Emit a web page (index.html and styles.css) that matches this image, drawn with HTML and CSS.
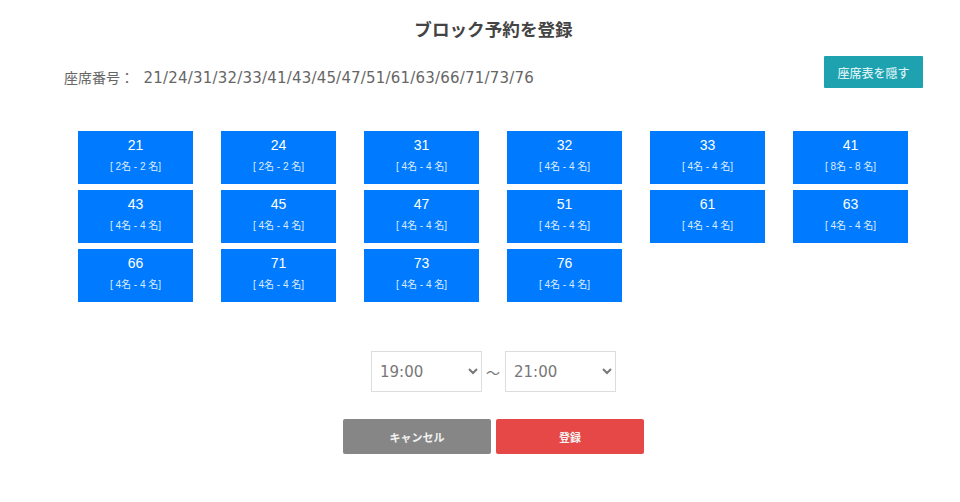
FILE: index.html
```html
<!DOCTYPE html>
<html>
<head>
  <meta charset="utf-8">
  <link rel="stylesheet" href="styles.css">
</head>
<body>
  <div class="modal">
    <h1 class="title">ブロック予約を登録</h1>

    <div class="seat-row">
      <div class="seat-label">座席番号： <span class="seat-list">21/24/31/32/33/41/43/45/47/51/61/63/66/71/73/76</span></div>
      <button class="toggle-button">座席表を隠す</button>
    </div>

    <div class="seat-grid">
      <div class="seat"><div class="seat-no">21</div><div class="seat-cap">[ 2名 - 2 名]</div></div>
      <div class="seat"><div class="seat-no">24</div><div class="seat-cap">[ 2名 - 2 名]</div></div>
      <div class="seat"><div class="seat-no">31</div><div class="seat-cap">[ 4名 - 4 名]</div></div>
      <div class="seat"><div class="seat-no">32</div><div class="seat-cap">[ 4名 - 4 名]</div></div>
      <div class="seat"><div class="seat-no">33</div><div class="seat-cap">[ 4名 - 4 名]</div></div>
      <div class="seat"><div class="seat-no">41</div><div class="seat-cap">[ 8名 - 8 名]</div></div>
      <div class="seat"><div class="seat-no">43</div><div class="seat-cap">[ 4名 - 4 名]</div></div>
      <div class="seat"><div class="seat-no">45</div><div class="seat-cap">[ 4名 - 4 名]</div></div>
      <div class="seat"><div class="seat-no">47</div><div class="seat-cap">[ 4名 - 4 名]</div></div>
      <div class="seat"><div class="seat-no">51</div><div class="seat-cap">[ 4名 - 4 名]</div></div>
      <div class="seat"><div class="seat-no">61</div><div class="seat-cap">[ 4名 - 4 名]</div></div>
      <div class="seat"><div class="seat-no">63</div><div class="seat-cap">[ 4名 - 4 名]</div></div>
      <div class="seat"><div class="seat-no">66</div><div class="seat-cap">[ 4名 - 4 名]</div></div>
      <div class="seat"><div class="seat-no">71</div><div class="seat-cap">[ 4名 - 4 名]</div></div>
      <div class="seat"><div class="seat-no">73</div><div class="seat-cap">[ 4名 - 4 名]</div></div>
      <div class="seat"><div class="seat-no">76</div><div class="seat-cap">[ 4名 - 4 名]</div></div>
    </div>

    <div class="time-row">
      <select class="time-select">
        <option>19:00</option>
      </select>
      <span class="time-sep">～</span>
      <select class="time-select">
        <option>21:00</option>
      </select>
    </div>

    <div class="action-row">
      <button class="action-button cancel">キャンセル</button>
      <button class="action-button submit">登録</button>
    </div>
  </div>
</body>
</html>
```

FILE: styles.css
```css
body {
  margin: 0;
  background: #fff;
  color: #666;
  font-family: "DejaVu Sans", "Noto Sans CJK JP", sans-serif;
}
.modal {
  width: 859px;
  margin-left: 64px;
  padding-top: 18px;
}
.title {
  margin: 0;
  text-align: center;
  font-size: 17.6px;
  line-height: 24px;
  font-weight: 700;
  color: #444;
}
.seat-row {
  display: flex;
  align-items: flex-start;
  justify-content: space-between;
  margin-top: 14px;
}
.seat-label {
  margin-top: 12px;
  font-size: 14px;
  line-height: 20px;
}
.seat-list {
  margin-left: 5px;
  font-size: 15px;
  letter-spacing: 0.2px;
}
.toggle-button {
  width: 99px;
  height: 32px;
  border: none;
  border-radius: 1px;
  background: #1ea2b0;
  color: #d8f0f2;
  font-family: inherit;
  font-size: 12px;
  font-weight: 500;
  padding: 0;
}
.seat-grid {
  display: grid;
  grid-template-columns: repeat(6, 115px);
  column-gap: 28px;
  row-gap: 6px;
  margin: 43px 0 0 14px;
}
.seat {
  height: 53px;
  background: #007bff;
  color: #fff;
  text-align: center;
  font-family: "Liberation Sans", "Noto Sans CJK JP", sans-serif;
}
.seat-no {
  padding-top: 6px;
  font-size: 14px;
  line-height: 16px;
}
.seat-cap {
  margin-top: 7px;
  font-size: 10px;
  line-height: 14px;
  color: #dcecff;
}
.time-row {
  display: flex;
  justify-content: center;
  align-items: center;
  margin-top: 49px;
  gap: 4px;
}
.time-select {
  width: 111px;
  height: 41px;
  padding-left: 4px;
  border: 1px solid #ddd;
  border-radius: 0;
  background: #fff;
  color: #777;
  font-family: inherit;
  font-size: 15px;
}
.time-sep {
  width: 15px;
  font-size: 14px;
  color: #777;
}
.action-row {
  display: flex;
  justify-content: center;
  gap: 5px;
  margin-top: 27px;
}
.action-button {
  width: 148px;
  height: 35px;
  border: none;
  border-radius: 2px;
  color: #f2f2f2;
  font-family: inherit;
  font-size: 11px;
  font-weight: 700;
  padding: 0;
}
.cancel {
  background: #868686;
}
.submit {
  background: #e64848;
}
```
